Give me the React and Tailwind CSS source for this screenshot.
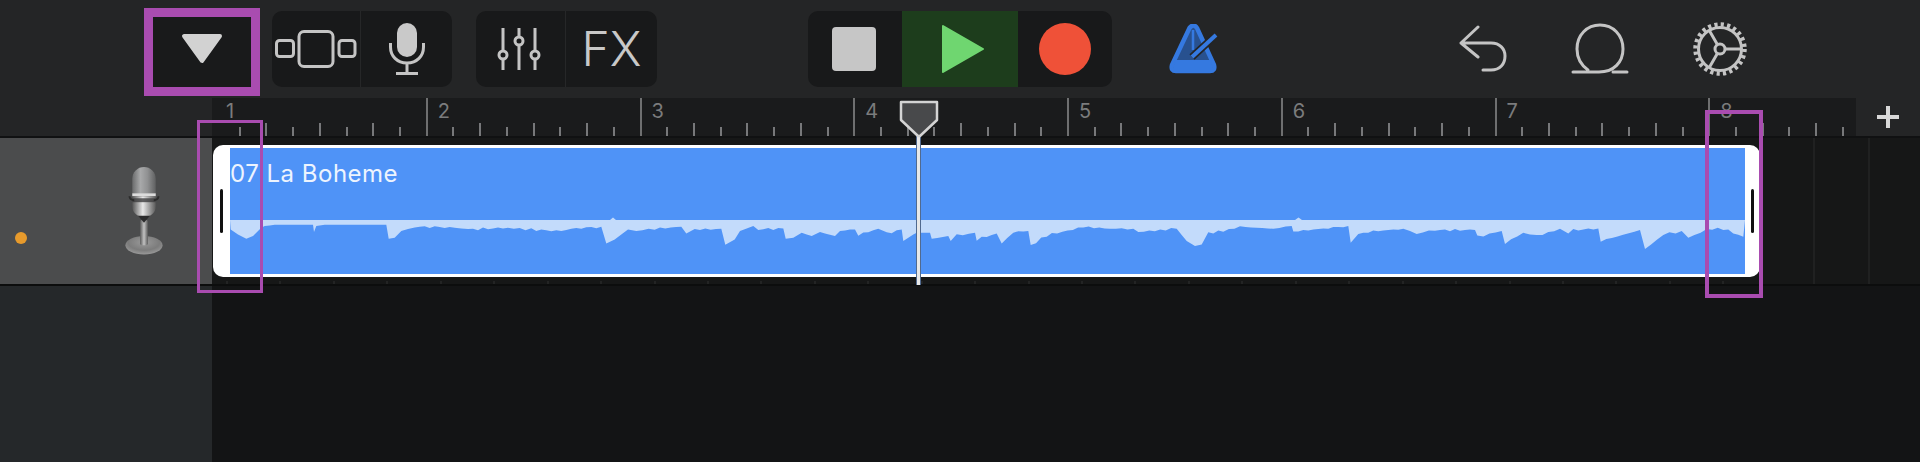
import React from "react";

const seg1 = [[8,50],[30,65],[55,78],[75,70],[100,45],[110,40],[140,36],[255,36],[258,58],[265,40],[290,36],[475,36],[482,78],[500,75],[520,55],[560,42],[620,42],[680,45],[720,50],[840,45],[910,50],[1000,55],[1030,48],[1120,42],[1135,92],[1160,80],[1200,50],[1225,55],[1280,47],[1360,42],[1375,62],[1400,50],[1480,48],[1492,96],[1520,80]];
const seg2 = [[0,55],[40,40],[55,50],[130,47],[137,78],[160,75],[185,60],[215,70],[240,58],[285,70],[300,55],[345,50],[355,65],[415,48],[440,62],[485,50],[490,85],[520,65],[530,60],[570,60],[575,78],[625,70],[632,85],[650,68],[705,60],[710,80],[770,62],[785,92],[820,58],[865,55],[872,98],[920,68],[1030,42],[1110,48],[1180,48],[1195,58],[1310,48],[1340,85],[1365,100],[1385,95],[1405,60],[1450,55]];
const seg3 = [[0,42],[100,48],[155,40],[160,56],[325,40],[332,90],[355,65],[400,55],[490,48],[530,62],[585,52],[705,52],[712,72],[785,55],[795,92],[850,60],[890,70],[960,48],[985,62],[1000,52],[1075,47],[1082,85],[1200,52],[1215,110],[1270,65],[1325,55],[1345,75],[1400,50],[1450,48],[1510,72]];

function wavePoints() {
  const raw = [
    ...seg1.map(([x, y]) => [228 + x / 3, 212 + y / 3 + 0.8]),
    ...seg2.map(([x, y]) => [740 + x / 3, 212 + y / 3 + 0.8]),
    ...seg3.map(([x, y]) => [1240 + x / 3, 212 + y / 3 + 0.8]),
  ];
  const pts = [[230, 220]];
  for (let i = 0; i < raw.length - 1; i++) {
    const [x0, y0] = raw[i];
    const [x1, y1] = raw[i + 1];
    const n = Math.max(1, Math.floor((x1 - x0) / 5));
    for (let k = 0; k < n; k++) {
      const t = k / n;
      const x = x0 + (x1 - x0) * t;
      const jitter = n > 2 && y0 > 226 ? Math.round(Math.sin(x * 1.7) + Math.sin(x * 0.53)) * 0.6 : 0;
      pts.push([x, y0 + (y1 - y0) * t + jitter]);
    }
  }
  pts.push(raw[raw.length - 1]);
  pts.push([1745, 220]);
  return pts.map((p) => `${p[0].toFixed(1)},${p[1].toFixed(1)}`).join(" ");
}

function Waveform() {
  return (
    <svg width="1515" height="54" viewBox="230 220 1515 54" className="block shrink-0 overflow-visible">
      <polygon points={wavePoints()} fill="#c3dbfb" />
      <path d="M610 220 L613 217.5 L616 220 Z M1295 220 L1298.500 217.5 L1302 220 Z" fill="#c3dbfb" />
    </svg>
  );
}

function Measure({ n }) {
  const slots = [0, 1, 2, 3, 4, 5, 6, 7];
  return (
    <div className="relative flex h-full w-[213.75px] shrink-0 items-end">
      {slots.map((i) => (
        <div key={i} className="h-full w-[26.72px] shrink-0 flex items-end">
          {i === 0 ? (
            n > 1 ? <div className="h-full w-[2px] bg-[#6e6f70]" /> : null
          ) : i % 2 === 0 ? (
            <div className="h-[13px] w-[2px] bg-[#77787a]" />
          ) : (
            <div className="h-[9px] w-[2px] bg-[#77787a]" />
          )}
        </div>
      ))}
      <span className={`absolute top-[1px] font-['Inter',sans-serif] text-[20px] leading-[24px] text-[#7b7c7d] ${n === 1 ? "left-[14px]" : "left-[12px]"}`}>{n}</span>
    </div>
  );
}

function StudioMic() {
  return (
    <svg width="44" height="90" viewBox="0 0 44 92" className="shrink-0">
      <defs>
        <linearGradient id="cap" x1="0" x2="1" y1="0" y2="0">
          <stop offset="0" stopColor="#6a6b6c" />
          <stop offset="0.35" stopColor="#a8a9aa" />
          <stop offset="0.65" stopColor="#909192" />
          <stop offset="1" stopColor="#5f6061" />
        </linearGradient>
        <linearGradient id="low" x1="0" x2="1" y1="0" y2="0">
          <stop offset="0" stopColor="#555" />
          <stop offset="0.45" stopColor="#e8e8e8" />
          <stop offset="1" stopColor="#5a5a5a" />
        </linearGradient>
        <linearGradient id="stem" x1="0" x2="1" y1="0" y2="0">
          <stop offset="0" stopColor="#5a5a5a" />
          <stop offset="0.5" stopColor="#c2c2c2" />
          <stop offset="1" stopColor="#5a5a5a" />
        </linearGradient>
        <radialGradient id="base" cx="0.5" cy="0.35" r="0.7">
          <stop offset="0" stopColor="#9a9a9a" />
          <stop offset="0.6" stopColor="#7c7c7c" />
          <stop offset="1" stopColor="#a0a0a0" />
        </radialGradient>
      </defs>
      <ellipse cx="22" cy="82" rx="19" ry="9.500" fill="url(#base)" />
      <rect x="18" y="56" width="8" height="26" rx="2" fill="url(#stem)" />
      <path d="M10 14 a12 12 0 0 1 24 0 V30 H10 Z" fill="url(#cap)" />
      <rect x="10" y="29" width="24" height="3" fill="#dcdcdc" />
      <path d="M10 32 H34 V42 C34 50 28 53 22 53 C16 53 10 50 10 42 Z" fill="url(#low)" />
      <rect x="10" y="34" width="24" height="4" fill="#3d3d3e" opacity="0.8" />
      <path d="M7 32 Q8 36 12 36 M37 32 Q36 36 32 36" stroke="#2c2c2c" strokeWidth="2" fill="none" />
      <path d="M16 52 L22 59 L28 52 Z" fill="#2c2c2d" />
    </svg>
  );
}

function Gear() {
  return (
    <svg width="54" height="54" viewBox="0 0 54 54" className="shrink-0" fill="none" stroke="#c4c4c4">
      <circle cx="27" cy="27" r="24.500" strokeWidth="4.500" strokeDasharray="3.200 3.213" />
      <circle cx="27" cy="27" r="21.500" strokeWidth="3" />
      <circle cx="27" cy="27" r="5" strokeWidth="3" />
      <path d="M32 27 H48 M24.500 22.700 L16.300 8.500 M24.500 31.300 L16.300 45.500" strokeWidth="3" />
    </svg>
  );
}

export default function App() {
  const beats = Array.from({ length: 29 }, (_, i) => i);
  return (
    <div className="flex h-[462px] w-[1920px] flex-col overflow-hidden bg-[#131415] font-['Inter',sans-serif]">
      {/* toolbar */}
      <div className="flex h-[98px] shrink-0 items-center bg-[#242526] pl-[144px]">
        <div className="mt-[6px] flex h-[88px] w-[116px] shrink-0 items-center justify-center border-[9px] border-[#a94cb0] bg-[#191a1b] pb-[7px]">
          <svg width="42" height="31" viewBox="0 0 42 31">
            <path d="M3 3 H39 L21 28 Z" fill="#d2d2d2" stroke="#d2d2d2" strokeWidth="4" strokeLinejoin="round" />
          </svg>
        </div>

        <div className="ml-[12px] flex h-[76px] w-[180px] shrink-0 rounded-[10px] bg-[#18191a]">
          <div className="flex w-[89px] shrink-0 items-center justify-center border-r border-[#262728]">
            <svg width="82" height="38" viewBox="0 0 82 38" fill="none" stroke="#c4c4c4" strokeWidth="3">
              <rect x="1.500" y="10.500" width="17" height="16" rx="3" />
              <rect x="24" y="1.500" width="34" height="35" rx="5" />
              <rect x="64" y="10.500" width="16" height="16" rx="3" />
            </svg>
          </div>
          <div className="flex flex-1 items-center justify-center">
            <svg width="36" height="52" viewBox="0 0 36 52" fill="none" stroke="#c4c4c4" strokeWidth="3">
              <rect x="8" y="0" width="20" height="34" rx="10" fill="#c9c9c9" stroke="none" />
              <path d="M1.500 20 V24 C1.500 33 8 40 18 40 C28 40 34.500 33 34.500 24 V20 M18 40 V50.500 M7 50.500 H29" />
            </svg>
          </div>
        </div>

        <div className="ml-[24px] flex h-[76px] w-[181px] shrink-0 rounded-[10px] bg-[#18191a]">
          <div className="flex w-[90px] shrink-0 items-center justify-center border-r border-[#262728] pr-[3px]">
            <svg width="44" height="42" viewBox="0 0 44 42" fill="none" stroke="#c4c4c4" strokeWidth="3">
              <path d="M6 0 V23 M6 31 V42 M22 0 V9 M22 17 V42 M38 0 V23 M38 31 V42" />
              <circle cx="6" cy="27" r="4" />
              <circle cx="22" cy="13" r="4" />
              <circle cx="38" cy="27" r="4" />
            </svg>
          </div>
          <div className="flex flex-1 items-center justify-center text-[48px] font-light leading-none text-[#c8c8c8]">FX</div>
        </div>

        <div className="ml-[151px] flex h-[76px] w-[304px] shrink-0 overflow-hidden rounded-[10px] bg-[#18191a]">
          <div className="flex w-[94px] shrink-0 items-center justify-center pr-[2px]">
            <div className="h-[44px] w-[44px] rounded-[4px] bg-[#c6c6c6]" />
          </div>
          <div className="flex w-[116px] shrink-0 items-center justify-center bg-[#1d3d1c]">
            <svg width="44" height="50" viewBox="0 0 44 50" className="ml-[5px]">
              <path d="M2 2 L42 25 L2 48 Z" fill="#6fd670" stroke="#6fd670" strokeWidth="2" strokeLinejoin="round" />
            </svg>
          </div>
          <div className="flex flex-1 items-center justify-center">
            <div className="h-[52px] w-[52px] rounded-full bg-[#ef5138]" />
          </div>
        </div>

        <svg width="50" height="50" viewBox="0 0 50 50" className="ml-[57px] shrink-0" fill="none">
          <path d="M20.500 4 L3 41 Q1.500 47 7 47 H41 Q46.500 47 45 41 L28 4 Q24.500 -1 20.500 4 Z" fill="#28518f" stroke="#3579e0" strokeWidth="4.500" strokeLinejoin="round" />
          <path d="M6 36 H42 L44 46 H4 Z" fill="#3579e0" />
          <path d="M24 6 V26" stroke="#3579e0" strokeWidth="2.500" />
          <path d="M23 33 L47 11" stroke="#242526" strokeWidth="7.500" />
          <path d="M23 33 L47 11" stroke="#3579e0" strokeWidth="4" />
        </svg>

        <svg width="48" height="48" viewBox="0 0 48 48" className="ml-[240px] shrink-0" fill="none" stroke="#c4c4c4" strokeWidth="3" strokeLinecap="round" strokeLinejoin="round">
          <path d="M19 2 L2 18 L19 32 M2 18 H32 C41 18 46 24 46 31 C46 39 41 45 32 45 H24" />
        </svg>

        <svg width="58" height="52" viewBox="0 0 58 52" className="ml-[64px] shrink-0" fill="none" stroke="#c4c4c4" strokeWidth="3" strokeLinecap="round">
          <path d="M2 49 H28 C43 49 52 39 52 26 C52 12 42 2 29 2 C16 2 6 12 6 26 C6 35 10 42 17 47 M42 49 H56" />
        </svg>

        <div className="ml-[64px]"><Gear /></div>
      </div>

      {/* ruler */}
      <div className="flex h-[38px] shrink-0 bg-[#242526]">
        <div className="w-[212px] shrink-0" />
        <div className="flex w-[1644px] shrink-0 overflow-hidden bg-[#1a1b1c]">
          {[1, 2, 3, 4, 5, 6, 7, 8].map((n) => <Measure key={n} n={n} />)}
        </div>
        <div className="flex flex-1 items-center justify-center pb-[1px]">
          <svg width="24" height="24" viewBox="0 0 24 24" stroke="#d8d8d8" strokeWidth="4"><path d="M12 1 V23 M1 12 H23" /></svg>
        </div>
      </div>
      <div className="h-[2px] shrink-0 bg-[#101112]" />

      {/* track row */}
      <div className="flex h-[148px] shrink-0 border-b-[2px] border-[#0c0d0d]">
        <div className="flex w-[212px] shrink-0 bg-[#4b4c4d]">
          <div className="ml-[15px] mt-[94px] h-[12px] w-[12px] rounded-full bg-[#e79a2c]" />
          <div className="ml-[95px] mt-[27px]"><StudioMic /></div>
        </div>
        <div className="flex flex-1 bg-[#161717]">
          <div className="ml-[1px] flex w-[1547px] shrink-0 flex-col pt-[7px]">
            <div className="flex h-[132px] shrink-0 rounded-[10px] bg-white">
              <div className="flex w-[17px] shrink-0 items-center justify-center">
                <div className="h-[44px] w-[3px] rounded-sm bg-[#111]" />
              </div>
              <div className="my-[3px] flex w-[1515px] shrink-0 flex-col justify-between bg-[#4f93f7]">
                <div className="pt-[12px] text-[24px] leading-[28px] tracking-[0.5px] text-[#edf4fe]">07 La Boheme</div>
                <Waveform />
              </div>
              <div className="flex flex-1 items-center justify-center">
                <div className="h-[44px] w-[3px] rounded-sm bg-[#111]" />
              </div>
            </div>
            <div className="ml-[13px] mt-[4px] flex">
              {beats.map((i) => (
                <div key={i} className="h-[3px] w-[53.44px] shrink-0"><div className="h-[3px] w-[2px] bg-[#232424]" /></div>
              ))}
            </div>
          </div>
          <div className="ml-[53px] h-full w-[55px] shrink-0 border-l-2 border-[#202121]" />
          <div className="h-full flex-1 border-l-2 border-[#202121]" />
        </div>
      </div>

      {/* empty area */}
      <div className="flex flex-1">
        <div className="w-[212px] shrink-0 bg-[#25282a]" />
        <div className="flex-1 bg-[#131415]" />
      </div>

      {/* overlays */}
      <div className="absolute left-[197px] top-[120px] h-[173px] w-[66px] border-[3px] border-[#a94cb0]" />
      <div className="absolute left-[1705px] top-[110px] h-[188px] w-[58px] border-[4px] border-[#a94cb0]" />
      <div className="absolute left-[916px] top-[132px] h-[153px] w-[5px] border-x border-[#2b4a78]/80 bg-[#e8e8e8]" />
      <svg width="40" height="38" viewBox="0 0 40 38" className="absolute left-[899px] top-[100px]">
        <path d="M2 2 H38 V20 L21 36 H19 L2 20 Z" fill="#48494b" stroke="#d4d4d4" strokeWidth="2.500" strokeLinejoin="round" />
      </svg>
    </div>
  );
}
